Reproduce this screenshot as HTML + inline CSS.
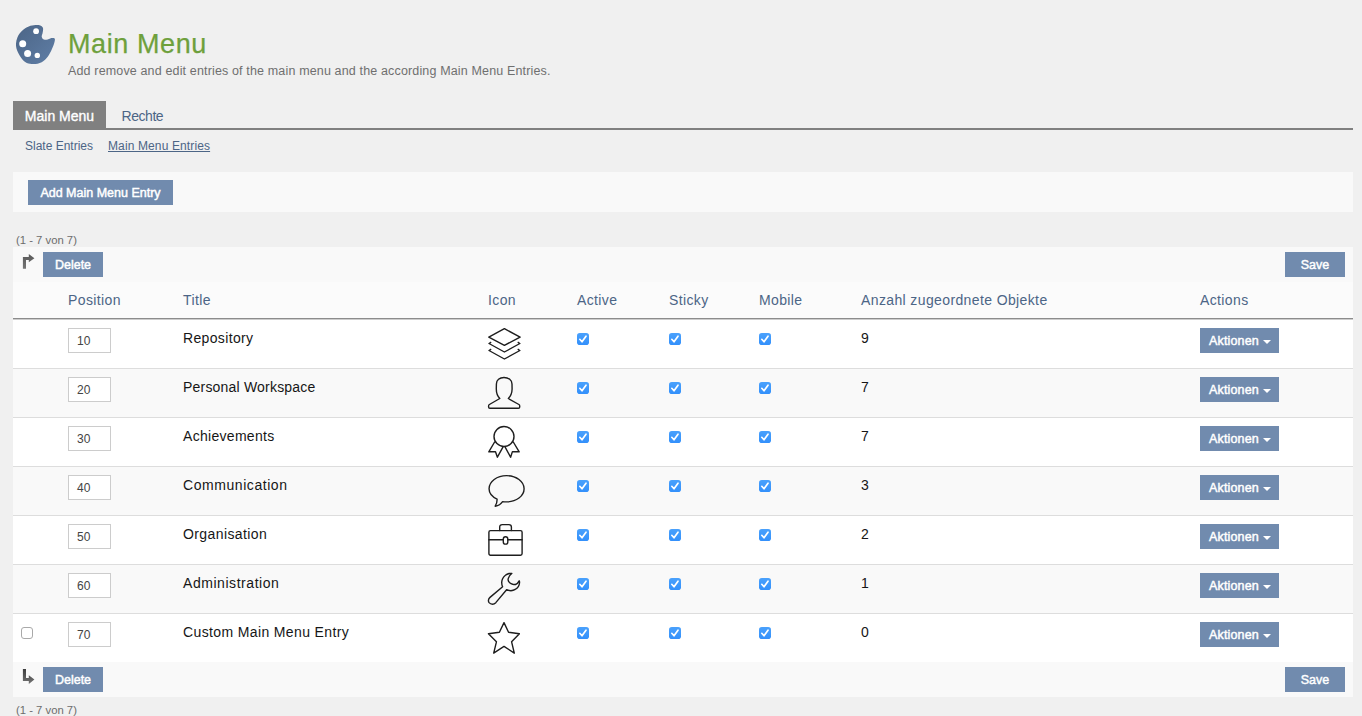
<!DOCTYPE html>
<html lang="de">
<head>
<meta charset="utf-8">
<title>Main Menu</title>
<style>
*{box-sizing:border-box;margin:0;padding:0}
html,body{width:1362px;height:716px;overflow:hidden;background:#f0f0f0}
body{font-family:"Liberation Sans",sans-serif;font-size:14px;line-height:20px;color:#161616;position:relative}
a{color:#4c6586;text-decoration:none}
.abs{position:absolute}
#hicon{left:10px;top:20px;width:52px;height:48px}
h1{position:absolute;left:68px;top:25px;-webkit-text-stroke:.25px #6ea03c;letter-spacing:.6px;font-size:27px;line-height:38px;font-weight:400;color:#6ea03c;white-space:nowrap}
#desc{left:68px;top:62px;letter-spacing:.15px;font-size:12.5px;line-height:18px;color:#6f6f6f;white-space:nowrap}
#tabs{left:13px;top:101px;width:1340px;height:29px;border-bottom:2px solid #808080}
#tabs a{position:absolute;top:0;height:29px;line-height:31px;font-size:14px;white-space:nowrap}
#tabs a.act{left:0;width:93px;background:#808080;color:#fff;text-align:center;-webkit-text-stroke:.35px #fff}
#tabs a.t2{left:108.500px;letter-spacing:-.45px}
#sub a{position:absolute;top:136px;font-size:12px;line-height:20px;white-space:nowrap}
#toolbar{left:13px;top:172px;width:1340px;height:40px;background:#f9f9f9}
.btn{position:absolute;height:25px;line-height:27px;-webkit-text-stroke:.45px #fff;background:#718bae;color:#fff;font-size:12.5px;text-align:center;white-space:nowrap;display:block}
.cnt{font-size:11.3px;line-height:14px;color:#6c6c6c;left:16px;white-space:nowrap}
#tbl{left:13px;top:247px;width:1340px;height:450px;background:#fff}
.bar{position:absolute;left:0;width:1340px;height:35px;background:#f9f9f9}
table{position:absolute;left:0;top:35px;width:1340px;border-collapse:separate;border-spacing:0;table-layout:fixed}
th{height:37px;text-align:left;font-weight:400;color:#4c6586;padding:0 8px;background:#fbfbfb;border-bottom:1px solid #8c8c8c;font-size:14px;letter-spacing:.38px;white-space:nowrap;vertical-align:middle}
td{height:49px;padding:8px;vertical-align:top;border-top:1px solid #ddd;white-space:nowrap;letter-spacing:.3px}
tbody tr:first-child td{border-top:1px solid #cdcdcd}
tbody tr:nth-child(even) td{background:#f9f9f9}
td .pos{display:block;width:43px;height:25px;border:1px solid #ccc;background:#fff;font-size:12px;line-height:25px;padding-left:8px;color:#444;letter-spacing:0}
td svg.ic{display:block;width:34px;height:32px;overflow:visible}
.cb{display:block;width:12px;height:12px;margin-top:5px;border-radius:2.800px;background:linear-gradient(#4aa1fc,#3390fb)}
.cb svg{display:block;width:12px;height:12px}
.cbe{display:block;width:12px;height:12px;margin-top:5px;border-radius:3px;background:#fff;border:1px solid #a9a9a9}
td .btn{letter-spacing:.15px;position:relative;width:79px;text-align:left;padding-left:9px}
.caret{display:inline-block;width:0;height:0;border-left:4px solid transparent;border-right:4px solid transparent;border-top:4px solid #fff;vertical-align:middle;margin-left:4px}
</style>
</head>
<body>
<svg id="hicon" class="abs" viewBox="10 20 52 48"><defs><linearGradient id="g" x1="0" y1="0" x2="1" y2="1"><stop offset="0" stop-color="#4c6586"/><stop offset="1" stop-color="#5f7ea6"/></linearGradient></defs>
<path fill="url(#g)" d="M35.500 25C38.500 24.800 41.500 25.200 42.800 27.400C43.600 29 42.800 31.500 42.500 33.400C42 35 41.500 36 41.800 37.100C42.200 38.800 43.500 39.800 44.900 39.800C47 39.800 48.500 38.900 50.200 38.400C51.500 37.900 52.500 37.800 53.600 38.100C54.800 38.500 55.100 39.300 54.900 40.100C54.600 42.500 53.800 44.800 52.900 46.800C51.800 49.700 50.500 52.500 48.900 54.900C47.400 57.200 45.700 59.300 43.500 60.900C41.200 62.600 38.500 63.700 35.500 63.900C32.400 64.100 29.400 63.900 26.800 62.900C24 61.600 21.800 59 20.100 56.200C18.500 53.700 17.100 51 16.400 48.200C16 46.700 15.900 45 16 43.500C16.100 41.400 16.600 39.300 17.400 37.400C18.500 34.900 20.100 32.500 22.100 30.700C24 28.900 26.300 27.400 28.800 26.400C30.900 25.500 33.300 25.100 35.500 25Z"/>
<circle cx="36.100" cy="31.200" r="2.900" fill="#fff"/><circle cx="22.700" cy="43.800" r="3.500" fill="#fff"/><circle cx="27.600" cy="53.500" r="3.500" fill="#fff"/><circle cx="37.300" cy="55.400" r="2.700" fill="#fff"/></svg>
<h1>Main Menu</h1>
<div id="desc" class="abs">Add remove and edit entries of the main menu and the according Main Menu Entries.</div>

<div id="tabs" class="abs"><a class="act">Main Menu</a><a class="t2">Rechte</a></div>
<div id="sub"><a style="left:25px">Slate Entries</a><a style="left:108px;letter-spacing:.12px;text-decoration:underline">Main Menu Entries</a></div>

<div id="toolbar" class="abs"><a class="btn" style="left:15px;top:8px;width:145px">Add Main Menu Entry</a></div>

<div class="abs cnt" style="top:233px">(1 - 7 von 7)</div>

<div id="tbl" class="abs">
<div class="bar" style="top:0">
<svg class="abs" style="left:0;top:0;width:40px;height:35px" viewBox="13 247 40 35"><defs><linearGradient id="ga" x1="0" y1="0" x2="0" y2="1"><stop offset="0" stop-color="#585858"/><stop offset="1" stop-color="#767676"/></linearGradient></defs><path fill="url(#ga)" d="M22.900 268.700V256.900H28.800V254L34.400 258.300L28.800 262.300V260H26V268.700Z"/></svg>
<a class="btn" style="left:30px;top:5px;width:60px">Delete</a>
<a class="btn" style="left:1272px;top:5px;width:60px">Save</a>
</div>
<table>
<colgroup><col style="width:47px"><col style="width:115px"><col style="width:305px"><col style="width:89px"><col style="width:92px"><col style="width:90px"><col style="width:102px"><col style="width:339px"><col style="width:161px"></colgroup>
<thead><tr><th></th><th>Position</th><th>Title</th><th>Icon</th><th>Active</th><th>Sticky</th><th>Mobile</th><th>Anzahl zugeordnete Objekte</th><th>Actions</th></tr></thead>
<tbody>
<tr><td></td><td><span class="pos">10</span></td><td style="letter-spacing:0.35px">Repository</td><td><svg class="ic" viewBox="0 0 34 32"><g fill="none" stroke="#1e1e1e" stroke-width="1.400" stroke-linejoin="round" stroke-linecap="butt"><path d="M16.400 .7L32.100 9.100L16.400 17.300L.8 9.100z"/><path d="M3.200 14.200L1 15.500L16.400 24L31.900 15.500L29.700 14.200"/><path d="M3.200 21.200L1 22.500L16.400 31L31.900 22.500L29.700 21.200"/></g></svg></td><td><span class="cb"><svg viewBox="0 0 12 12"><path d="M2.800 6.300l2.200 2.500l4-5.600" fill="none" stroke="#fff" stroke-width="1.700" stroke-linecap="round" stroke-linejoin="round"/></svg></span></td><td><span class="cb"><svg viewBox="0 0 12 12"><path d="M2.800 6.300l2.200 2.500l4-5.600" fill="none" stroke="#fff" stroke-width="1.700" stroke-linecap="round" stroke-linejoin="round"/></svg></span></td><td><span class="cb"><svg viewBox="0 0 12 12"><path d="M2.800 6.300l2.200 2.500l4-5.600" fill="none" stroke="#fff" stroke-width="1.700" stroke-linecap="round" stroke-linejoin="round"/></svg></span></td><td>9</td><td><a class="btn">Aktionen<i class="caret"></i></a></td></tr>
<tr><td></td><td><span class="pos">20</span></td><td style="letter-spacing:0.2px">Personal Workspace</td><td><svg class="ic" viewBox="0 0 34 32"><g fill="none" stroke="#1e1e1e" stroke-width="1.400" stroke-linejoin="round" stroke-linecap="round"><path d="M16 .5C11.500 .5 8.400 3.200 8.400 7L8.300 12C8.300 16 9.600 19.300 11.800 21.500L1.400 27.500C.7 27.900 .6 28.400 .6 29L.6 30C.6 30.900 1.100 31.300 1.900 31.300H30.400C31.200 31.300 31.700 30.900 31.700 30V29C31.700 28.400 31.600 27.900 30.900 27.500L20.300 21.500C22.600 19.300 24 16 24.100 12L24 7C24 3.200 20.600 .5 16 .5Z"/></g></svg></td><td><span class="cb"><svg viewBox="0 0 12 12"><path d="M2.800 6.300l2.200 2.500l4-5.600" fill="none" stroke="#fff" stroke-width="1.700" stroke-linecap="round" stroke-linejoin="round"/></svg></span></td><td><span class="cb"><svg viewBox="0 0 12 12"><path d="M2.800 6.300l2.200 2.500l4-5.600" fill="none" stroke="#fff" stroke-width="1.700" stroke-linecap="round" stroke-linejoin="round"/></svg></span></td><td><span class="cb"><svg viewBox="0 0 12 12"><path d="M2.800 6.300l2.200 2.500l4-5.600" fill="none" stroke="#fff" stroke-width="1.700" stroke-linecap="round" stroke-linejoin="round"/></svg></span></td><td>7</td><td><a class="btn">Aktionen<i class="caret"></i></a></td></tr>
<tr><td></td><td><span class="pos">30</span></td><td style="letter-spacing:0.3px">Achievements</td><td><svg class="ic" viewBox="0 0 34 32"><g fill="none" stroke="#1e1e1e" stroke-width="1.400" stroke-linejoin="round" stroke-linecap="butt"><circle cx="16" cy="10.500" r="10"/><path d="M6.900 15.500L.8 25.800L7.500 25.650L9.400 31.200L15.200 20.700"/><path d="M25 15.500L31.200 25.800L24.400 25.650L22.600 31.200L16.900 20.700"/></g></svg></td><td><span class="cb"><svg viewBox="0 0 12 12"><path d="M2.800 6.300l2.200 2.500l4-5.600" fill="none" stroke="#fff" stroke-width="1.700" stroke-linecap="round" stroke-linejoin="round"/></svg></span></td><td><span class="cb"><svg viewBox="0 0 12 12"><path d="M2.800 6.300l2.200 2.500l4-5.600" fill="none" stroke="#fff" stroke-width="1.700" stroke-linecap="round" stroke-linejoin="round"/></svg></span></td><td><span class="cb"><svg viewBox="0 0 12 12"><path d="M2.800 6.300l2.200 2.500l4-5.600" fill="none" stroke="#fff" stroke-width="1.700" stroke-linecap="round" stroke-linejoin="round"/></svg></span></td><td>7</td><td><a class="btn">Aktionen<i class="caret"></i></a></td></tr>
<tr><td></td><td><span class="pos">40</span></td><td style="letter-spacing:0.56px">Communication</td><td><svg class="ic" viewBox="0 0 34 32"><g fill="none" stroke="#1e1e1e" stroke-width="1.400" stroke-linejoin="round" stroke-linecap="round"><path d="M18.600 .65C28.300 .65 36.100 6.500 36.100 13.750C36.100 21 28.300 26.900 18.600 26.900C17.200 26.900 15.900 26.800 14.600 26.600C13 29 10.500 30.700 7.200 31.200C8.500 29.200 9.200 26.800 9.060 24.100C4.200 21.800 1.070 18 1.070 13.750C1.070 6.500 8.900 .65 18.600 .65Z"/></g></svg></td><td><span class="cb"><svg viewBox="0 0 12 12"><path d="M2.800 6.300l2.200 2.500l4-5.600" fill="none" stroke="#fff" stroke-width="1.700" stroke-linecap="round" stroke-linejoin="round"/></svg></span></td><td><span class="cb"><svg viewBox="0 0 12 12"><path d="M2.800 6.300l2.200 2.500l4-5.600" fill="none" stroke="#fff" stroke-width="1.700" stroke-linecap="round" stroke-linejoin="round"/></svg></span></td><td><span class="cb"><svg viewBox="0 0 12 12"><path d="M2.800 6.300l2.200 2.500l4-5.600" fill="none" stroke="#fff" stroke-width="1.700" stroke-linecap="round" stroke-linejoin="round"/></svg></span></td><td>3</td><td><a class="btn">Aktionen<i class="caret"></i></a></td></tr>
<tr><td></td><td><span class="pos">50</span></td><td style="letter-spacing:0.4px">Organisation</td><td><svg class="ic" viewBox="0 0 34 32"><g fill="none" stroke="#1e1e1e" stroke-width="1.400" stroke-linejoin="round" stroke-linecap="round"><rect x=".9" y="6.600" width="33.200" height="24.600" rx="1.600"/><path d="M11.700 6.600V3.100C11.700 1.600 12.700 .65 14.200 .65H20.900C22.400 .65 23.400 1.600 23.400 3.100V6.600"/><path d="M.9 15.800H15.300M19.800 15.800H34.100"/><rect x="15.300" y="12.750" width="4.500" height="7.400" rx="2.200"/></g></svg></td><td><span class="cb"><svg viewBox="0 0 12 12"><path d="M2.800 6.300l2.200 2.500l4-5.600" fill="none" stroke="#fff" stroke-width="1.700" stroke-linecap="round" stroke-linejoin="round"/></svg></span></td><td><span class="cb"><svg viewBox="0 0 12 12"><path d="M2.800 6.300l2.200 2.500l4-5.600" fill="none" stroke="#fff" stroke-width="1.700" stroke-linecap="round" stroke-linejoin="round"/></svg></span></td><td><span class="cb"><svg viewBox="0 0 12 12"><path d="M2.800 6.300l2.200 2.500l4-5.600" fill="none" stroke="#fff" stroke-width="1.700" stroke-linecap="round" stroke-linejoin="round"/></svg></span></td><td>2</td><td><a class="btn">Aktionen<i class="caret"></i></a></td></tr>
<tr><td></td><td><span class="pos">60</span></td><td style="letter-spacing:0.55px">Administration</td><td><svg class="ic" viewBox="0 0 34 32"><g fill="none" stroke="#1e1e1e" stroke-width="1.400" stroke-linejoin="round" stroke-linecap="round"><path d="M23.800 .5C22.500 1.500 21.500 2.600 21 3.800C20.400 4.800 20 5.800 20.100 6.900C20.200 8 20.800 9 21.700 9.700C22.500 10.400 23.500 10.900 24.700 11.200C25.600 11.400 26.600 11.600 27.500 11.500C29 10.800 30.300 9.500 31.200 7.800C31.600 8.500 31.600 9.300 31.500 10C31.400 11.300 31 12.600 30.300 13.700C29.600 14.800 28.500 15.800 27.200 16.400C25.900 17.200 24.400 17.600 22.900 17.700C21.400 17.700 19.900 17.400 18.600 16.700L7.800 29.650C6.900 30.600 5.700 31.200 4.450 31.200C3.100 31.200 1.900 30.600 1.070 29.650C.5 28.900 .4 28 .45 27.200C.6 26.100 1.200 25.100 2 24.400L14.600 13.700C14 12.300 13.700 10.800 13.700 9.400C13.800 8.100 14.100 6.800 14.600 5.700C15.200 4.400 16.200 3.200 17.400 2.300C18.500 1.400 19.700 .8 21 .45C22 .3 23 .3 23.800 .5Z"/></g></svg></td><td><span class="cb"><svg viewBox="0 0 12 12"><path d="M2.800 6.300l2.200 2.500l4-5.600" fill="none" stroke="#fff" stroke-width="1.700" stroke-linecap="round" stroke-linejoin="round"/></svg></span></td><td><span class="cb"><svg viewBox="0 0 12 12"><path d="M2.800 6.300l2.200 2.500l4-5.600" fill="none" stroke="#fff" stroke-width="1.700" stroke-linecap="round" stroke-linejoin="round"/></svg></span></td><td><span class="cb"><svg viewBox="0 0 12 12"><path d="M2.800 6.300l2.200 2.500l4-5.600" fill="none" stroke="#fff" stroke-width="1.700" stroke-linecap="round" stroke-linejoin="round"/></svg></span></td><td>1</td><td><a class="btn">Aktionen<i class="caret"></i></a></td></tr>
<tr><td><span class="cbe"></span></td><td><span class="pos">70</span></td><td style="letter-spacing:0.37px">Custom Main Menu Entry</td><td><svg class="ic" viewBox="0 0 34 32"><g fill="none" stroke="#1e1e1e" stroke-width="1.400" stroke-linejoin="round" stroke-linecap="butt"><path d="M16 .65L20.550 10.300L31.400 11.700L23.600 19.800L26.300 31.060L16 24.400L5.700 31.060L8.440 19.800L.45 11.700L11.400 10.300Z"/></g></svg></td><td><span class="cb"><svg viewBox="0 0 12 12"><path d="M2.800 6.300l2.200 2.500l4-5.600" fill="none" stroke="#fff" stroke-width="1.700" stroke-linecap="round" stroke-linejoin="round"/></svg></span></td><td><span class="cb"><svg viewBox="0 0 12 12"><path d="M2.800 6.300l2.200 2.500l4-5.600" fill="none" stroke="#fff" stroke-width="1.700" stroke-linecap="round" stroke-linejoin="round"/></svg></span></td><td><span class="cb"><svg viewBox="0 0 12 12"><path d="M2.800 6.300l2.200 2.500l4-5.600" fill="none" stroke="#fff" stroke-width="1.700" stroke-linecap="round" stroke-linejoin="round"/></svg></span></td><td>0</td><td><a class="btn">Aktionen<i class="caret"></i></a></td></tr>
</tbody>
</table>
<div class="bar" style="top:415px">
<svg class="abs" style="left:0;top:0;width:40px;height:35px" viewBox="13 662 40 35"><defs><linearGradient id="gb" x1="0" y1="0" x2="0" y2="1"><stop offset="0" stop-color="#3e3e3e"/><stop offset="1" stop-color="#747474"/></linearGradient></defs><path fill="url(#gb)" d="M22.900 669.100H26V678.100H28.800V675.300L34.400 679.600L28.800 683.900V681H22.900Z"/></svg>
<a class="btn" style="left:30px;top:5px;width:60px">Delete</a>
<a class="btn" style="left:1272px;top:5px;width:60px">Save</a>
</div>
</div>
<div class="abs cnt" style="top:703px">(1 - 7 von 7)</div>
</body>
</html>
